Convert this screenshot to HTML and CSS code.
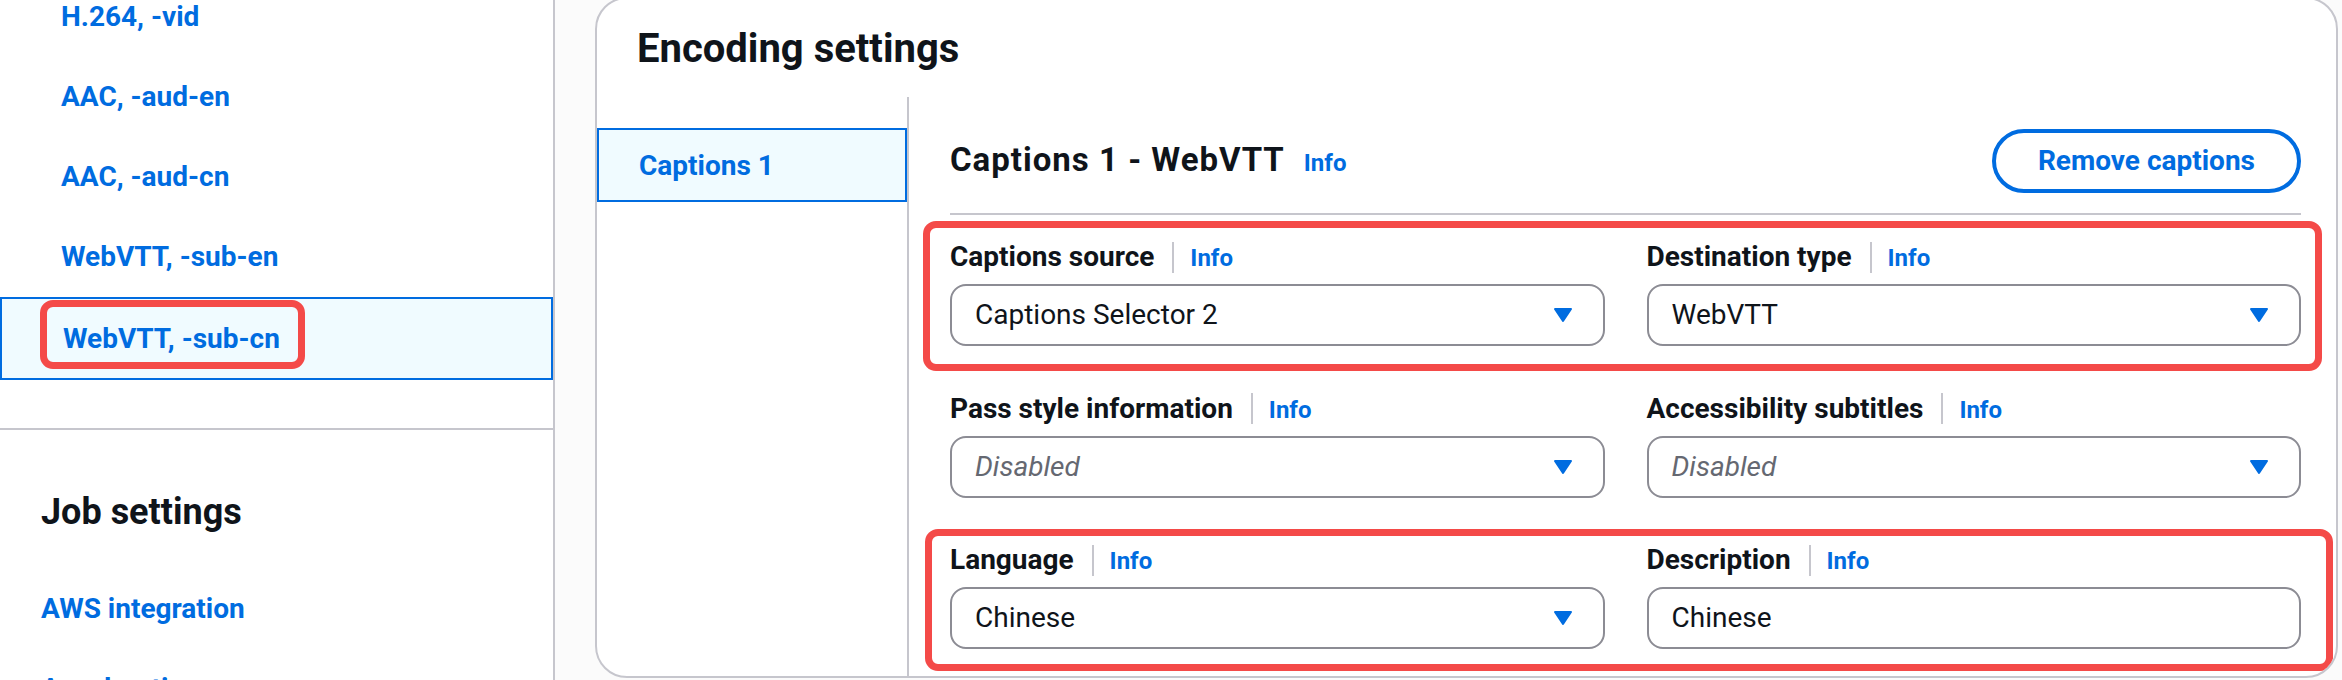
FILE: index.html
```html
<!DOCTYPE html>
<html lang="en">
<head>
<meta charset="utf-8">
<title>Encoding settings</title>
<link rel="stylesheet" href="styles.css">
</head>
<body>
<div class="page">
  <aside class="sidebar">
    <ul class="nav-list">
      <li class="nav-item"><a class="nav-link">H.264, -vid</a></li>
      <li class="nav-item"><a class="nav-link">AAC, -aud-en</a></li>
      <li class="nav-item"><a class="nav-link">AAC, -aud-cn</a></li>
      <li class="nav-item"><a class="nav-link">WebVTT, -sub-en</a></li>
      <li class="nav-item selected"><a class="nav-link annot-host">WebVTT, -sub-cn<span class="annot annot-nav"></span></a></li>
    </ul>
    <div class="side-divider"></div>
    <h2 class="side-heading">Job settings</h2>
    <ul class="side-links">
      <li class="side-link">AWS integration</li>
      <li class="side-link">Acceleration</li>
    </ul>
  </aside>

  <main class="main">
    <section class="container">
      <h2 class="container-title">Encoding settings</h2>
      <div class="tabs-layout">
        <nav class="tab-list">
          <div class="tab active">Captions 1</div>
        </nav>
        <div class="tab-panel">
          <header class="panel-header">
            <h3 class="panel-title"><span class="panel-title-text">Captions 1 - WebVTT</span><a class="info info-title">Info</a></h3>
            <button class="btn-outline">Remove captions</button>
          </header>

          <div class="form">
            <div class="form-row">
              <div class="field">
                <div class="label"><span class="label-text">Captions source</span><span class="label-sep"></span><a class="info">Info</a></div>
                <div class="select"><span class="value">Captions Selector 2</span><svg class="caret" viewBox="0 0 16 16" width="32" height="32"><path d="M4 5h8l-4 6-4-6z"/></svg></div>
              </div>
              <div class="field">
                <div class="label"><span class="label-text">Destination type</span><span class="label-sep"></span><a class="info">Info</a></div>
                <div class="select"><span class="value">WebVTT</span><svg class="caret" viewBox="0 0 16 16" width="32" height="32"><path d="M4 5h8l-4 6-4-6z"/></svg></div>
              </div>
              <span class="annot annot-row1"></span>
            </div>

            <div class="form-row">
              <div class="field">
                <div class="label"><span class="label-text">Pass style information</span><span class="label-sep"></span><a class="info">Info</a></div>
                <div class="select"><span class="value placeholder">Disabled</span><svg class="caret" viewBox="0 0 16 16" width="32" height="32"><path d="M4 5h8l-4 6-4-6z"/></svg></div>
              </div>
              <div class="field">
                <div class="label"><span class="label-text">Accessibility subtitles</span><span class="label-sep"></span><a class="info">Info</a></div>
                <div class="select"><span class="value placeholder">Disabled</span><svg class="caret" viewBox="0 0 16 16" width="32" height="32"><path d="M4 5h8l-4 6-4-6z"/></svg></div>
              </div>
            </div>

            <div class="form-row">
              <div class="field">
                <div class="label"><span class="label-text">Language</span><span class="label-sep"></span><a class="info">Info</a></div>
                <div class="select"><span class="value">Chinese</span><svg class="caret" viewBox="0 0 16 16" width="32" height="32"><path d="M4 5h8l-4 6-4-6z"/></svg></div>
              </div>
              <div class="field">
                <div class="label"><span class="label-text">Description</span><span class="label-sep"></span><a class="info">Info</a></div>
                <div class="select input"><span class="value">Chinese</span></div>
              </div>
              <span class="annot annot-row3"></span>
            </div>
          </div>
        </div>
      </div>
    </section>
  </main>
</div>
</body>
</html>
```

FILE: styles.css
```css
* { box-sizing: border-box; }

html, body {
  margin: 0;
  padding: 0;
  width: 2342px;
  height: 680px;
  overflow: hidden;
  background: #ffffff;
  font-family: Roboto, "Noto Sans", "Liberation Sans", sans-serif;
  color: #0f141a;
}

.page {
  display: flex;
  width: 2342px;
  height: 680px;
  overflow: hidden;
}

/* ---------- sidebar ---------- */
.sidebar {
  width: 555px;
  flex: none;
  border-right: 2px solid #c6c6cd;
  background: #ffffff;
  display: flex;
  flex-direction: column;
}

.nav-list {
  list-style: none;
  margin: -23px 0 0;
  padding: 0;
}

.nav-item {
  padding: 20px 0 20px 61px;
  font-size: 28px;
  line-height: 40px;
  font-weight: 700;
}

.nav-link {
  color: #006ce0;
  text-decoration: none;
}

.nav-item.selected {
  border: 2px solid #006ce0;
  background: #f0fbff;
  padding: 20px 0 19px 61px;
}

.annot-host {
  position: relative;
  display: inline-block;
}

.annot {
  position: absolute;
  border: 7px solid #f44a48;
  border-radius: 13px;
  pointer-events: none;
}

.annot-nav {
  left: -23px;
  right: -25px;
  top: -19px;
  bottom: -10px;
}

.side-divider {
  margin-top: 48px;
  border-top: 2px solid #c6c6cd;
}

.side-heading {
  margin: 60px 0 0;
  padding-left: 41px;
  font-size: 36px;
  line-height: 44px;
  font-weight: 700;
  color: #0f141a;
}

.side-links {
  list-style: none;
  margin: 35px 0 0;
  padding: 0;
}

.side-link {
  padding: 20px 0 20px 41px;
  font-size: 28px;
  line-height: 40px;
  font-weight: 700;
  color: #006ce0;
}

/* ---------- main ---------- */
.main {
  flex: 1;
  background: #fbfbfb;
  padding: 0 4px 0 40px;
}

.container {
  margin-top: -3px;
  height: 681px;
  background: #ffffff;
  border: 2px solid #c6c6cd;
  border-radius: 32px;
  padding-top: 26px;
  display: flex;
  flex-direction: column;
  overflow: hidden;
}

.container-title {
  margin: 0 0 0 40px;
  font-size: 40px;
  line-height: 48px;
  font-weight: 700;
  color: #0f141a;
}

.tabs-layout {
  margin-top: 24px;
  flex: 1;
  display: flex;
}

.tab-list {
  width: 310px;
  flex: none;
  padding-top: 31px;
}

.tab {
  border: 2px solid #006ce0;
  background: #f0fbff;
  padding: 16px 40px 14px;
  font-size: 28px;
  line-height: 40px;
  font-weight: 700;
  color: #006ce0;
}

.tab-panel {
  flex: 1;
  border-left: 2px solid #c6c6cd;
  padding: 32px 35px 0 41px;
}

.panel-header {
  display: flex;
  align-items: center;
  justify-content: space-between;
  height: 86px;
  padding-bottom: 20px;
  border-bottom: 2px solid #c6c6cd;
}

.panel-title {
  margin: 0;
  display: flex;
  align-items: baseline;
  font-size: 33px;
  line-height: 40px;
  font-weight: 700;
  color: #0f141a;
}

.panel-title-text {
  letter-spacing: 1px;
}

.info {
  color: #006ce0;
  font-size: 24px;
  font-weight: 700;
  text-decoration: none;
}

.info-title {
  margin-left: 19px;
}

.btn-outline {
  height: 64px;
  padding: 0 42px;
  border: 4px solid #006ce0;
  border-radius: 40px;
  background: #ffffff;
  color: #006ce0;
  font-family: inherit;
  font-size: 28px;
  font-weight: 700;
  line-height: 40px;
}

/* ---------- form ---------- */
.form {
  padding-top: 22px;
  display: flex;
  flex-direction: column;
  gap: 42.5px;
}

.form-row {
  position: relative;
  display: grid;
  grid-template-columns: 1fr 1fr;
  column-gap: 42px;
}

.label {
  display: flex;
  align-items: baseline;
  height: 40px;
  margin-bottom: 7px;
}

.label-text {
  font-size: 28px;
  line-height: 40px;
  font-weight: 700;
  color: #0f141a;
}

.label-sep {
  align-self: center;
  width: 2px;
  height: 31px;
  background: #c6c6cd;
  margin: 0 16px 0 18px;
}

.select {
  height: 62px;
  border: 2px solid #8c8c94;
  border-radius: 16px;
  background: #ffffff;
  padding: 0 24px 0 23px;
  display: flex;
  align-items: center;
  justify-content: space-between;
}

.value {
  font-size: 28px;
  line-height: 40px;
  color: #0f141a;
}

.value.placeholder {
  font-style: italic;
  color: #656871;
}

.caret {
  display: block;
  fill: #006ce0;
  stroke: #006ce0;
  stroke-width: 1;
  stroke-linejoin: round;
}

.annot-row1 {
  left: -27px;
  right: -21px;
  top: -16px;
  bottom: -25px;
}

.annot-row3 {
  left: -25px;
  right: -32px;
  top: -11px;
  bottom: -22px;
}
```
